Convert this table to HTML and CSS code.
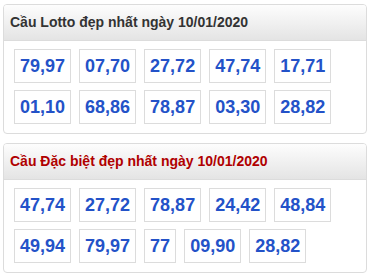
FILE: index.html
```html
<!DOCTYPE html>
<html lang="vi">
<head>
<meta charset="utf-8">
<link rel="stylesheet" href="styles.css">
</head>
<body>
<div class="page">
  <section class="panel">
    <h2 class="panel-title">Cầu Lotto đẹp nhất ngày 10/01/2020</h2>
    <div class="nums">
      <span class="num">79,97</span>
      <span class="num">07,70</span>
      <span class="num">27,72</span>
      <span class="num">47,74</span>
      <span class="num">17,71</span>
      <span class="num">01,10</span>
      <span class="num">68,86</span>
      <span class="num">78,87</span>
      <span class="num">03,30</span>
      <span class="num">28,82</span>
    </div>
  </section>
  <section class="panel">
    <h2 class="panel-title red">Cầu Đặc biệt đẹp nhất ngày 10/01/2020</h2>
    <div class="nums">
      <span class="num">47,74</span>
      <span class="num">27,72</span>
      <span class="num">78,87</span>
      <span class="num">24,42</span>
      <span class="num">48,84</span>
      <span class="num">49,94</span>
      <span class="num">79,97</span>
      <span class="num">77</span>
      <span class="num">09,90</span>
      <span class="num">28,82</span>
    </div>
  </section>
</div>
</body>
</html>
```

FILE: styles.css
```css
html, body {
  margin: 0;
  padding: 0;
  background: #fff;
}
body {
  font-family: "Liberation Sans", Arial, sans-serif;
}
.page {
  padding: 4px 2px 0 3px;
  display: flex;
  flex-direction: column;
  gap: 9px;
}
.panel {
  border: 1px solid #dcdcdc;
  border-radius: 4px;
  background: #fff;
  overflow: hidden;
}
.panel-title {
  margin: 0;
  height: 35px;
  line-height: 35px;
  padding: 0 6px;
  font-size: 14px;
  font-weight: bold;
  color: #333;
  background: linear-gradient(to bottom, #fdfdfd, #e4e4e4);
  border-bottom: 1px solid #dcdcdc;
}
.panel-title.red {
  color: #b00000;
}
.nums {
  display: flex;
  flex-wrap: wrap;
  gap: 7px 8px;
  padding: 8px 10px 9px;
}
.num {
  display: block;
  border: 1px solid #dcdcdc;
  padding: 0 5px;
  height: 32px;
  line-height: 32px;
  font-size: 18px;
  font-weight: bold;
  color: #2352c8;
  background: #fff;
}
```
